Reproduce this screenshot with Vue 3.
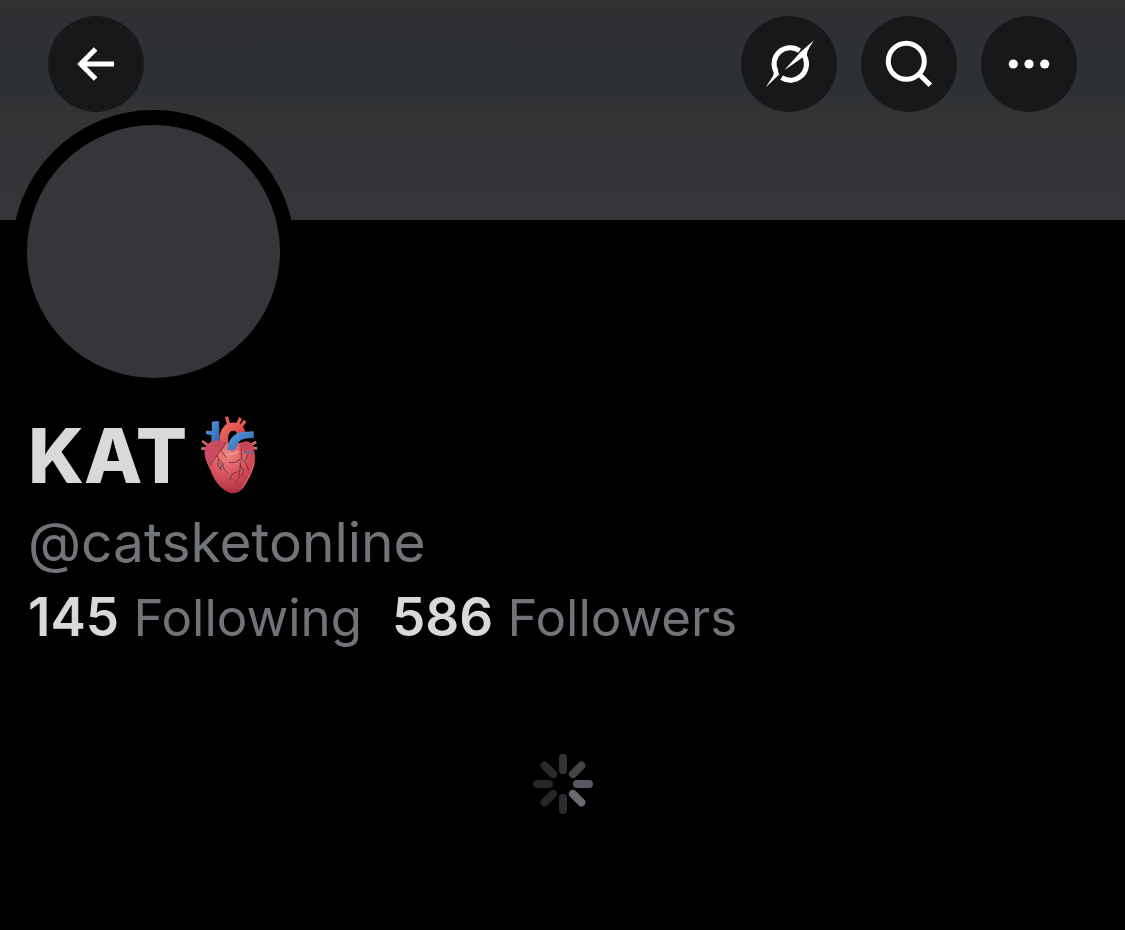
<template>
  <main class="profile">
    <header class="banner">
      <button type="button" class="round-button" aria-label="Back">
        <svg viewBox="0 0 96 96" fill="none" stroke="#fff" stroke-width="5">
          <path d="M47.6 32.9 32.7 48l14.9 15.1M33 48h33" />
        </svg>
      </button>
      <div class="actions">
        <button type="button" class="round-button" aria-label="Grok">
          <svg viewBox="0 0 96 96" fill="#fff">
            <g fill="none" stroke="#fff" stroke-width="5">
              <path d="M58.6 34.7A16.2 16.2 0 0 0 35.2 56" />
              <path d="M40.6 61.7A16.2 16.2 0 0 0 64 41.2" />
            </g>
            <path d="M32.2 53.5C34.2 58 31.5 61 24.7 71.3L38.3 58.4 36 53.5Z" />
            <path d="M66.4 41.5C65 36.6 67.4 32.8 73 24.3L59.5 36 43.3 54.3 61.6 41.6 63 43Z" />
          </svg>
        </button>
        <button type="button" class="round-button" aria-label="Search">
          <svg viewBox="0 0 96 96" fill="none" stroke="#fff" stroke-width="5">
            <circle cx="45.3" cy="45.2" r="18" />
            <path d="M58 58 69.3 69.3" />
          </svg>
        </button>
        <button type="button" class="round-button" aria-label="More">
          <svg viewBox="0 0 96 96" fill="#fff">
            <circle cx="32.3" cy="48" r="4.6" />
            <circle cx="48" cy="48" r="4.6" />
            <circle cx="63.7" cy="48" r="4.6" />
          </svg>
        </button>
      </div>
    </header>
    <div class="avatar"></div>
    <section class="info">
      <h1 class="name">
        {{ user.name }}
        <svg class="heart" viewBox="35 33 170 234" role="img" aria-label="Anatomical heart">
          <defs>
            <radialGradient id="muscle" cx="0.45" cy="0.25" r="0.8">
              <stop offset="0" stop-color="#ee8580" />
              <stop offset="0.5" stop-color="#d9545c" />
              <stop offset="1" stop-color="#a92c3c" />
            </radialGradient>
            <linearGradient id="vein" x1="0" y1="0" x2="1" y2="1">
              <stop offset="0" stop-color="#5a9be0" />
              <stop offset="1" stop-color="#2f62ad" />
            </linearGradient>
            <linearGradient id="artery" x1="0" y1="0" x2="1" y2="1">
              <stop offset="0" stop-color="#f0685f" />
              <stop offset="1" stop-color="#c4363c" />
            </linearGradient>
          </defs>
          <g fill="none" stroke="#cf7066" stroke-width="8">
            <path d="M38 108l16 12M35 131l20-1M200 111l-16 9M203 130l-18-1" />
          </g>
          <g fill="none" stroke="#e25c54" stroke-width="10">
            <path d="M111 35l7 27M153 39l-12 26M167 47l-16 22" />
          </g>
          <path
            d="M67 50l21-2 3 60-26 5 1-22-17-4 1-10 17 1z"
            fill="url(#vein)"
          />
          <path d="M105 122C98 84 111 65 131 65c17 0 24 10 24 24" fill="none" stroke="url(#artery)" stroke-width="25" />
          <path
            d="M50 124c8-13 24-18 43-12 20 6 40 4 58 2 14-6 34 0 40 14 8 20 8 46-1 66-9 20-17 38-30 56-12 16-30 18-46 10-24-12-42-36-50-62-4-9-8-14-12-26-8-17-9-35-2-48z"
            fill="url(#muscle)"
          />
          <path d="M50 124c9-16 34-22 56-13 0 20-16 27-26 38-8 11-12 21-20 32-14-16-18-42-10-57z" fill="#c94a61" />
          <path d="M151 119c12-15 29-13 38 0 6 8 7 16 1 22-14-1-31 1-40-8z" fill="#c9455a" />
          <path d="M113 133c2-26 19-49 45-52l35-2v19l-28 3c-15 2-20 13-25 28-8 9-19 10-27 4z" fill="url(#vein)" />
          <path d="M162 142l29 1" fill="none" stroke="#526fa0" stroke-width="5" />
          <g fill="none" stroke="#813040" stroke-width="3" stroke-linecap="round" stroke-linejoin="round">
            <path d="M108 113C104 130 91 137 83 150 74 164 69 170 62 181" />
            <path d="M82 151c6 12 9 17 18 24 0 15 5 23 15 29M93 136c9 8 10 16 17 21M87 161l-2 20 10 15" />
            <path d="M155 134l1 27 13 12 8 23M156 160l-19 12-18 1M154 174l-3 23-23 10-6 17M150 198l-3 24-10 10M151 181l11 13-4 19M176 148l-7 17M101 180l-12 11" />
          </g>
          <g fill="none" stroke="#5b668e" stroke-width="3" stroke-linecap="round">
            <path d="M92 172l4 24M149 186l12 13M158 165l-9 10M128 210l-10 12" />
          </g>
          <path d="M115 147c9 1 18 2 28-6" fill="none" stroke="#f3a19b" stroke-width="7" stroke-linecap="round" opacity="0.6" />
          <path d="M192 175c-4 24-20 54-35 75" fill="none" stroke="#ef7779" stroke-width="4" stroke-linecap="round" opacity="0.6" />
        </svg>
      </h1>
      <p class="handle">{{ user.handle }}</p>
      <nav class="stats">
        <a v-for="stat in stats" :key="stat.label" href="#" class="stat">
          <strong>{{ stat.count }}</strong> {{ stat.label }}
        </a>
      </nav>
    </section>
    <svg class="spinner" viewBox="-30 -30 60 60" role="img" aria-label="Loading">
      <line
        v-for="(color, index) in spokes"
        :key="index"
        y1="-14"
        y2="-26"
        :stroke="color"
        :transform="`rotate(${index * 45})`"
      />
    </svg>
  </main>
</template>

<script setup>
const user = {
  name: "KAT",
  handle: "@catsketonline",
};

const stats = [
  { count: 145, label: "Following" },
  { count: 586, label: "Followers" },
];

// clockwise, starting at the top
const spokes = [
  "#333436",
  "#434548",
  "#56595d",
  "#686b71",
  "#2b2b2d",
  "#272728",
  "#272728",
  "#2a2a2c",
];
</script>

<style>
body {
  margin: 0;
  background: #000;
}
</style>

<style scoped>
.profile {
  display: flex;
  flex-direction: column;
  min-height: 100vh;
  background: #000;
  color: #d9d9d9;
  font-family: Inter, "Liberation Sans", sans-serif;
}

.banner {
  display: flex;
  justify-content: space-between;
  box-sizing: border-box;
  height: 220px;
  padding: 16px 48px;
  background: linear-gradient(#303132, #2e3033 12%, #2e3134 42%, #323335 50%, #353639);
}

.actions {
  display: flex;
  gap: 24px;
}

.round-button {
  width: 96px;
  height: 96px;
  padding: 0;
  border: 0;
  border-radius: 50%;
  background: #17181a;
  cursor: pointer;
}

.round-button svg {
  display: block;
  width: 96px;
  height: 96px;
}

.avatar {
  width: 253px;
  height: 253px;
  margin: -110px 0 0 12px;
  border: 15px solid #000;
  border-radius: 50%;
  background: #353639;
}

.info {
  padding: 12px 28px 0;
}

.name {
  display: flex;
  align-items: center;
  gap: 14px;
  margin: 0;
  font-size: 76px;
  font-weight: 800;
  line-height: 100px;
}

.heart {
  width: 57px;
  height: 78px;
}

.handle {
  margin: 0;
  color: #717579;
  font-size: 55px;
  line-height: 74px;
}

.stats {
  display: flex;
  gap: 30px;
  font-size: 51px;
  line-height: 76px;
}

.stat {
  color: #717378;
  text-decoration: none;
}

.stat strong {
  color: #d9d9d9;
  font-size: 53px;
  font-weight: 600;
}

.spinner {
  align-self: center;
  width: 60px;
  height: 60px;
  margin-top: 98px;
  stroke-width: 8;
  stroke-linecap: round;
}
</style>
